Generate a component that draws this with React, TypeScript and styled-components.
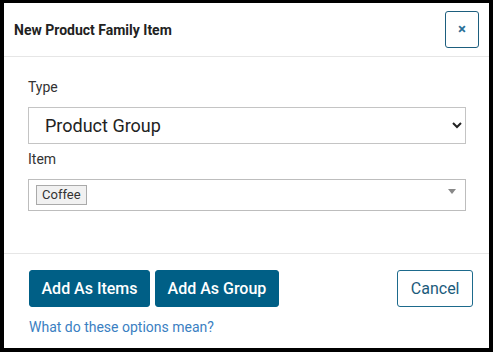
import React from "react";
import styled, { createGlobalStyle } from "styled-components";

const GlobalStyle = createGlobalStyle`
  html, body {
    margin: 0;
    padding: 0;
    background: #000;
  }
  body {
    font-family: Roboto, "Liberation Sans", Arial, sans-serif;
  }
`;

const Dialog = styled.div`
  margin: 3px 0 0 4px;
  width: 485px;
  height: 345px;
  background: #fff;
  display: flex;
  flex-direction: column;
`;

const Header = styled.div`
  height: 53px;
  padding: 0 10px;
  display: flex;
  align-items: center;
  justify-content: space-between;
  border-bottom: 1px solid #e6e6e6;
`;

const Title = styled.h4`
  margin: 0;
  font-size: 14px;
  font-weight: 700;
  color: #222;
`;

const CloseButton = styled.button`
  width: 34px;
  height: 37px;
  padding: 0;
  background: #fff;
  border: 1px solid #1d5e7e;
  border-radius: 3px;
  color: #2a6f97;
  font-family: inherit;
  font-size: 15px;
  font-weight: 700;
  line-height: 1;
  cursor: pointer;
`;

const Body = styled.div`
  flex: 1;
  padding: 20px 23px 0 24px;
  border-bottom: 1px solid #e6e6e6;
`;

const Label = styled.label<{ $gap: number }>`
  display: block;
  font-size: 14px;
  line-height: 20px;
  color: #333;
  margin-bottom: ${(p) => p.$gap}px;
`;

const Select = styled.select`
  display: block;
  width: 100%;
  height: 37px;
  margin-bottom: 5px;
  padding: 0 12px;
  border: 1px solid #c4c4c4;
  border-radius: 0;
  background: #fff;
  font-family: inherit;
  font-size: 18px;
  color: #222;
  outline: none;
`;

const MultiBox = styled.div`
  position: relative;
  height: 32px;
  box-sizing: border-box;
  border: 1px solid #bdbdbd;
  padding: 5px 7px;
  display: flex;
  align-items: flex-start;
`;

const Tag = styled.span`
  display: inline-block;
  height: 20px;
  box-sizing: border-box;
  padding: 0 5px;
  border: 1px solid #aaa;
  background: #f1f1f1;
  font-size: 13px;
  line-height: 18px;
  color: #333;
`;

const Caret = styled.span`
  position: absolute;
  right: 9px;
  top: 9px;
  width: 0;
  height: 0;
  border-left: 4px solid transparent;
  border-right: 4px solid transparent;
  border-top: 5px solid #888;
`;

const Footer = styled.div`
  height: 94px;
  box-sizing: border-box;
  padding: 16px 16px 0 25px;
`;

const ButtonRow = styled.div`
  display: flex;
  align-items: center;
`;

const Button = styled.button<{ $primary?: boolean }>`
  height: 37px;
  padding: ${(p) => (p.$primary ? "0 11.5px" : "0 12.5px")};
  margin-right: ${(p) => (p.$primary ? "5px" : "0")};
  margin-left: ${(p) => (p.$primary ? "0" : "auto")};
  border-radius: 3px;
  border: 1px solid ${(p) => (p.$primary ? "#005f86" : "#1d6a8c")};
  background: ${(p) => (p.$primary ? "#005f86" : "#fff")};
  color: ${(p) => (p.$primary ? "#fff" : "#1b5b7b")};
  font-family: inherit;
  font-size: 16px;
  font-weight: ${(p) => (p.$primary ? 500 : 400)};
  cursor: pointer;
`;

const HelpLink = styled.a`
  display: inline-block;
  margin-top: 10px;
  font-size: 14px;
  line-height: 20px;
  color: #3b80c2;
  text-decoration: none;
`;

export default function App() {
  return (
    <>
      <GlobalStyle />
      <Dialog>
        <Header>
          <Title>New Product Family Item</Title>
          <CloseButton aria-label="Close">×</CloseButton>
        </Header>
        <Body>
          <Label $gap={10}>Type</Label>
          <Select defaultValue="group">
            <option value="group">Product Group</option>
            <option value="item">Product</option>
          </Select>
          <Label $gap={10}>Item</Label>
          <MultiBox>
            <Tag>Coffee</Tag>
            <Caret />
          </MultiBox>
        </Body>
        <Footer>
          <ButtonRow>
            <Button $primary>Add As Items</Button>
            <Button $primary>Add As Group</Button>
            <Button>Cancel</Button>
          </ButtonRow>
          <HelpLink href="#">What do these options mean?</HelpLink>
        </Footer>
      </Dialog>
    </>
  );
}
